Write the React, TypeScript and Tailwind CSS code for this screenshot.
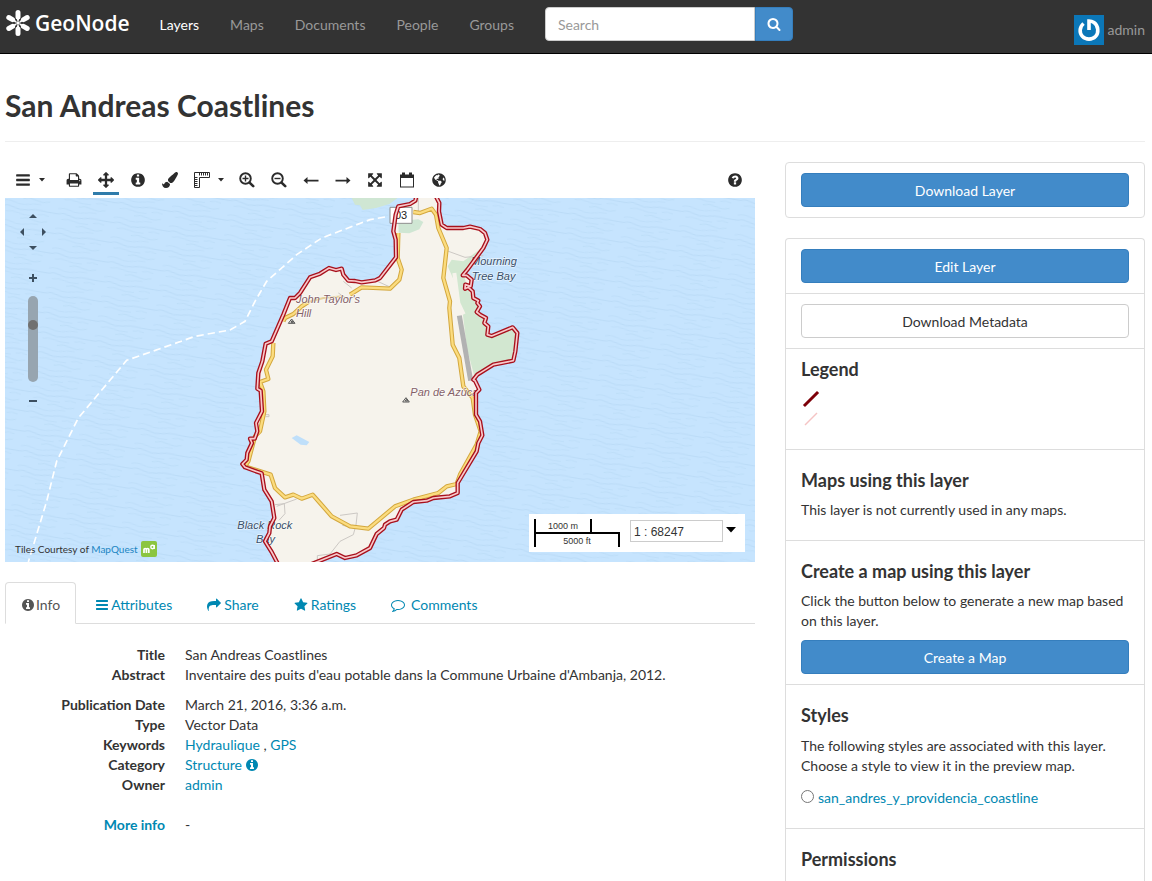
import { useState } from "react";
import type { ReactNode } from "react";
import { FaGlobeAmericas, FaPaintBrush } from "react-icons/fa";

const DISC =
  "M1664 896q0 209-103 385.5t-279.5 279.5-385.5 103-385.5-103-279.5-279.5-103-385.5 103-385.5 279.5-279.5 385.5-103 385.5 103 279.5 279.5 103 385.5z";

const ICONS = {
  bars: "M1664 1344v128q0 26-19 45t-45 19h-1408q-26 0-45-19t-19-45v-128q0-26 19-45t45-19h1408q26 0 45 19t19 45zm0-512v128q0 26-19 45t-45 19h-1408q-26 0-45-19t-19-45v-128q0-26 19-45t45-19h1408q26 0 45 19t19 45zm0-512v128q0 26-19 45t-45 19h-1408q-26 0-45-19t-19-45v-128q0-26 19-45t45-19h1408q26 0 45 19t19 45z",
  info:
    "M1152 1376v-160q0-14-9-23t-23-9h-96v-512q0-14-9-23t-23-9h-320q-14 0-23 9t-9 23v160q0 14 9 23t23 9h96v320h-96q-14 0-23 9t-9 23v160q0 14 9 23t23 9h448q14 0 23-9t9-23zM1024 480v-160q0-14-9-23t-23-9h-192q-14 0-23 9t-9 23v160q0 14 9 23t23 9h192q14 0 23-9t9-23z" + DISC,
  question:
    "M1024 1376v-192q0-14-9-23t-23-9h-192q-14 0-23 9t-9 23v192q0 14 9 23t23 9h192q14 0 23-9t9-23zm256-672q0-88-55.5-163t-138.5-116-170-41q-243 0-371 213-15 24 8 42l132 100q7 6 19 6 16 0 25-12 53-68 86-92 34-24 86-24 48 0 85.5 26t37.5 59q0 38-20 61t-68 45q-63 28-115.5 86.5t-52.5 125.5v36q0 14 9 23t23 9h192q14 0 23-9t9-23q0-19 21.5-49.5t54.5-49.5q32-18 49-28.5t46-35 44.5-48 28-60.5 12.5-81z" + DISC,
  search:
    "M1216 832q0-185-131.5-316.5t-316.5-131.5-316.5 131.5-131.5 316.5 131.5 316.5 316.5 131.5 316.5-131.5 131.5-316.5zm512 832q0 52-38 90t-90 38q-54 0-90-38l-343-342q-179 124-399 124-143 0-273.5-55.5t-225-150-150-225-55.5-273.5 55.5-273.5 150-225 225-150 273.5-55.5 273.5 55.5 225 150 150 225 55.5 273.5q0 220-124 399l343 343q37 37 37 90z",
  print:
    "M448 1536h896v-256h-896v256zm0-640h896v-384h-160q-40 0-68-28t-28-68v-160h-640v640zm1152 64q0-26-19-45t-45-19-45 19-19 45 19 45 45 19 45-19 19-45zm128 0v416q0 13-9.5 22.5t-22.5 9.5h-224v160q0 40-28 68t-68 28h-960q-40 0-68-28t-28-68v-160h-224q-13 0-22.5-9.5t-9.5-22.5v-416q0-79 56.5-135.5t135.5-56.5h64v-544q0-40 28-68t68-28h672q40 0 88 20t76 48l152 152q28 28 48 76t20 88v256h64q79 0 135.5 56.5t56.5 135.5z",
  move: "M1792 896q0 26-19 45l-256 256q-19 19-45 19t-45-19-19-45v-128h-384v384h128q26 0 45 19t19 45-19 45l-256 256q-19 19-45 19t-45-19l-256-256q-19-19-19-45t19-45 45-19h128v-384h-384v128q0 26-19 45t-45 19-45-19l-256-256q-19-19-19-45t19-45l256-256q19-19 45-19t45 19 19 45v128h384v-384h-128q-26 0-45-19t-19-45 19-45l256-256q19-19 45-19t45 19l256 256q19 19 19 45t-19 45-45 19h-128v384h384v-128q0-26 19-45t45-19 45 19l256 256q19 19 19 45z",
  expand:
    "M1411 541l-355 355 355 355 144-144q29-31 70-14 39 17 39 59v448q0 26-19 45t-45 19h-448q-42 0-59-40-17-39 14-69l144-144-355-355-355 355 144 144q31 30 14 69-17 40-59 40h-448q-26 0-45-19t-19-45v-448q0-42 40-59 39-17 69 14l144 144 355-355-355-355-144 144q-19 19-45 19-12 0-24-5-40-17-40-59v-448q0-26 19-45t45-19h448q42 0 59 40 17 39-14 69l-144 144 355 355 355-355-144-144q-31-30-14-69 17-40 59-40h448q26 0 45 19t19 45v448q0 42-39 59-13 5-25 5-26 0-45-19z",
  share:
    "M1792 640q0 26-19 45l-512 512q-19 19-45 19t-45-19-19-45v-256h-224q-98 0-175.5 6t-154 21.5-133 42.5-105.5 69.5-80 101-48.5 138.5-17.5 181q0 55 5 123 0 6 2.5 23.5t2.5 26.5q0 15-8.5 25t-23.5 10q-16 0-28-17-7-9-13-22t-13.5-30-10.5-24q-127-285-127-451 0-199 53-333 162-403 875-403h224v-256q0-26 19-45t45-19 45 19l512 512q19 19 19 45z",
  star: "M1728 647q0 22-26 48l-363 354 86 500q1 7 1 20 0 21-10.5 35.5t-30.5 14.5q-19 0-40-12l-449-236-449 236q-22 12-40 12-21 0-31.5-14.5t-10.5-35.5q0-6 2-20l86-500-364-354q-25-27-25-48 0-37 56-46l502-73 225-455q19-41 49-41t49 41l225 455 502 73q56 9 56 46z",
  comment:
    "M896 384q-204 0-381.5 69.5t-282 187.5-104.5 255q0 112 71.5 213.5t201.5 175.5l87 50-27 96q-24 91-70 172 152-63 275-171l43-38 57 6q69 8 130 8 204 0 381.5-69.5t282-187.5 104.5-255-104.5-255-282-187.5-381.5-69.5zm896 512q0 174-120 321.5t-326 233-450 85.5q-70 0-145-8-198 175-460 242-49 14-114 22h-5q-15 0-27-10.5t-16-27.5v-1q-3-4-.5-12t2-10 4.5-9.5l6-9 7-8.5 8-9q7-8 31-34.5t34.5-38 31-39.5 32.5-51 27-59 26-76q-157-89-247.5-220t-90.5-281q0-174 120-321.5t326-233 450-85.5 450 85.5 326 233 120 321.5z",
};

type IconName = keyof typeof ICONS;

function Icon({ name, className = "size-4" }: { name: IconName; className?: string }) {
  return (
    <svg viewBox="0 0 1792 1792" className={`shrink-0 ${className}`} fill="currentColor" fillRule="evenodd" aria-hidden="true">
      <path d={ICONS[name]} />
    </svg>
  );
}

function Magnifier({ sign }: { sign: string }) {
  return (
    <svg viewBox="0 0 16 16" className="size-4" fill="none" stroke="currentColor" aria-hidden="true">
      <circle cx="6.500" cy="6.500" r="5.300" strokeWidth="1.900" />
      <path d="M10.800 10.800l3.400 3.400" strokeWidth="2.600" strokeLinecap="round" />
      <path d={sign} strokeWidth="1.400" />
    </svg>
  );
}

function LongArrow({ d }: { d: string }) {
  return (
    <svg viewBox="0 0 16 16" className="size-4" fill="currentColor" aria-hidden="true">
      <path d={d} />
    </svg>
  );
}

function Caret() {
  return (
    <svg viewBox="0 0 6 4" className="h-1 w-[6px] shrink-0" fill="currentColor" aria-hidden="true">
      <path d="M0 0h6L3 3.500z" />
    </svg>
  );
}

function Logo() {
  return (
    <svg viewBox="0 0 26 28" className="h-7 w-[26px]" stroke="#fff" strokeLinecap="round" aria-hidden="true">
      <g strokeWidth="5">
        <path d="M13 3.500V8M13 20v4.500M3.800 8.500l3.700 2.100M18.500 17.400l3.700 2.100M22.200 8.500l-3.700 2.100M7.500 17.400l-3.700 2.100" />
      </g>
      <g strokeWidth="2">
        <path d="M13 8v3M13 17v3M8 11l2.500 1.500M15.500 15.500L18 17M18 11l-2.500 1.500M10.500 15.500L8 17" />
      </g>
      <circle cx="13" cy="14" r="1.800" fill="#fff" stroke="none" />
    </svg>
  );
}

const navLinks = ["Layers", "Maps", "Documents", "People", "Groups"];

function Navbar() {
  return (
    <header className="flex h-[54px] items-start border-b border-black bg-[#333] pl-[5px] pr-[7px]">
      <a href="#" className="mt-[9px] flex items-center gap-1 font-['Open_Sans',sans-serif] text-[21px] leading-7 font-semibold text-white">
        <Logo />
        GeoNode
      </a>
      <nav className="ml-[15px] flex gap-px">
        {navLinks.map((link, i) => (
          <a key={link} href="#" className={`px-[15px] py-[15px] leading-5 ${i === 0 ? "text-white" : "text-[#999]"}`}>
            {link}
          </a>
        ))}
      </nav>
      <form className="mt-[7px] ml-4 flex" onSubmit={(e) => e.preventDefault()}>
        <input
          type="text"
          aria-label="Search"
          placeholder="Search"
          className="h-[34px] w-[210px] rounded-l border border-[#ccc] bg-white px-3 placeholder:text-[#999]"
        />
        <button aria-label="Run search" className="flex h-[34px] w-[38px] items-center justify-center rounded-r border border-[#357ebd] bg-[#428bca] text-white">
          <Icon name="search" className="size-[14px]" />
        </button>
      </form>
      <a href="#" className="mt-[15px] ml-auto flex items-center gap-1 text-[#999]">
        <svg viewBox="0 0 30 30" className="size-[30px]" aria-hidden="true">
          <path fill="#0b77b8" d="M0 0h30v30H0z" />
          <path d="M9.500 8.500C5.500 12 5 18 8.500 21.500c3.500 3.500 9.500 3.500 13 0C25 18 24.500 10.500 20 7.500 18 6.200 15.500 6 15 6v9" fill="none" stroke="#fff" strokeWidth="3.600" />
        </svg>
        admin
      </a>
    </header>
  );
}

function ToolButton({ label, wide, active, children }: { label: string; wide?: boolean; active?: boolean; children: ReactNode }) {
  return (
    <button
      aria-label={label}
      className={`flex h-[33px] items-center justify-center gap-2 border-b-[3px] pt-[6px] ${wide ? "w-[39px]" : "w-[26px]"} ${active ? "border-[#2f7cab]" : "border-transparent"}`}
    >
      {children}
    </button>
  );
}

function Toolbar() {
  return (
    <div className="flex h-9 items-start gap-[6px] pl-[5px] text-[#2b2b2b]">
      <span className="mr-[6px]">
        <ToolButton label="Menu" wide>
          <Icon name="bars" />
          <Caret />
        </ToolButton>
      </span>
      <ToolButton label="Print">
        <Icon name="print" />
      </ToolButton>
      <ToolButton label="Pan map" active>
        <Icon name="move" />
      </ToolButton>
      <ToolButton label="Get feature info">
        <Icon name="info" />
      </ToolButton>
      <ToolButton label="Edit styles">
        <FaPaintBrush className="size-4" />
      </ToolButton>
      <ToolButton label="Measure" wide>
        <svg viewBox="0 0 16 16" className="size-4 shrink-0" fill="none" stroke="currentColor" aria-hidden="true">
          <path d="M.500 .500h15v5h-10v10h-5z" />
          <path d="M5.500 1v2.500M7.500 1v2.500M9.500 1v2.500M11.500 1v2.500M13.500 1v2.500M1 5.500h2.500M1 7.500h2.500M1 9.500h2.500M1 11.500h2.500M1 13.500h2.500" />
        </svg>
        <Caret />
      </ToolButton>
      <ToolButton label="Zoom in">
        <Magnifier sign="M3.500 6.500h6M6.500 3.500v6" />
      </ToolButton>
      <ToolButton label="Zoom out">
        <Magnifier sign="M3.500 6.500h6" />
      </ToolButton>
      <ToolButton label="Previous extent">
        <LongArrow d="M.500 8.500l4-3.500v2.700h11v1.700h-11V12z" />
      </ToolButton>
      <ToolButton label="Next extent">
        <LongArrow d="M15.500 8.500l-4-3.500v2.700H.500v1.700h11V12z" />
      </ToolButton>
      <ToolButton label="Zoom to layer extent">
        <Icon name="expand" />
      </ToolButton>
      <ToolButton label="Timeline">
        <svg viewBox="0 0 16 16" className="size-4" fill="currentColor" aria-hidden="true">
          <path fillRule="evenodd" d="M1 2.500h2V.500h3v2h4v-2h3v2h2v13H1zM2 6v8.500h12V6z" />
        </svg>
      </ToolButton>
      <ToolButton label="3D viewer">
        <FaGlobeAmericas className="size-[14px]" />
      </ToolButton>
      <span className="ml-auto pr-[7px]">
        <ToolButton label="Help">
          <Icon name="question" />
        </ToolButton>
      </span>
    </div>
  );
}

const COAST =
  "M560-10L556 8 540 18 505 25 497 50 490 100 497 125 498 178 450 240 436 247 395 253 375 249 355 248 340 230 335 212 318 216 297 210 270 227 240 238 210 285 195 300 180 300 160 350 125 430 107 437 97 490 85 525 82 572 92 578 96 640 78 675 82 700 74 722 60 722 66 735 52 765 50 785 37 798 45 808 95 826 103 875 125 910 133 960 120 985 118 1005 105 1030 125 1062 145 1100";
const COAST_EAST =
  "M240 1100L320 1068 345 1080 380 1072 420 1050 440 1008 462 990 465 980 480 970 500 965 515 935 550 912 590 908 610 900 660 895 683 885 683 855 740 760 745 735 757 712 750 670 738 650 738 585 748 575 735 548 730 545 742 530 790 500 850 488 856 460 862 405 848 388 785 414 772 410 775 385 763 375 768 360 750 350 740 342 750 325 742 315 745 308 730 300 728 280 715 268 705 272 706 260 722 265 725 245 710 232 698 232 712 215 760 150 772 125 765 105 750 93 720 86 700 90 650 90 635 80 627 40 628 15 615-10";
const LAND = COAST + " " + COAST_EAST.replace("M", "L") + "z";

const ROADS = [
  "M550 42L570 45 605 32 618 50 625 90 650 150 640 240 660 310 658 330 668 440 688 480 700 565 728 600 735 650 752 700 740 740 690 830 680 858 650 865 625 885 550 905 495 925 415 992 360 985 305 955 270 915 248 890 215 902 190 890 165 898 135 870 122 830 45 805",
  "M505 105L503 180 515 215 508 245 480 272 395 268 360 290",
  "M235 312L215 325 190 348 165 360 160 370",
  "M130 435L128 475 108 515 115 543 90 552 100 580 103 640 90 700 75 715 55 790 45 805",
];

function Peak({ x, y }: { x: number; y: number }) {
  return (
    <g transform={`translate(${x} ${y})`} fill="none" stroke="#555" strokeWidth="3" strokeLinejoin="round">
      <path d="M-10 14L0 1l10 13z" />
      <path d="M-2 11l3-5 4 5z" />
    </g>
  );
}

function MapCanvas() {
  return (
    <svg viewBox="-675 0 2250 1092" className="block h-auto w-full bg-[#c6e4fe]" aria-label="Map of San Andreas" role="img">
      <defs>
        <pattern id="waves" width="168" height="60" patternUnits="userSpaceOnUse" patternTransform="rotate(9)">
          <g fill="none" stroke="#b5d8f4" strokeWidth="3">
            <path opacity=".7" d="M0 8q18-8 36 0t42 2 40-4 50 2" />
            <path opacity=".5" d="M14 23q20-6 38 0t44 2M110 20q16-6 34 0" />
            <path opacity=".6" d="M60 38q20-8 40 0t42-2" />
            <path opacity=".5" d="M0 52q18-7 36 0t44 1 36-4" />
          </g>
        </pattern>
      </defs>
      <rect x="-675" width="2250" height="1092" fill="url(#waves)" />

      <path d="M365 0l10 20 15 2 8 14 40-6 40-12 25-18z" fill="#cfe6d3" />
      <path d={LAND} fill="#f6f3ec" />
      <path d="M505 70l60-6 15 8-12 22-30 12-32-2z" fill="#cfe6d3" />
      <path d="M755 150l-55 40-35-5-12 20 20 45 12 62 14 40 12 100 22 82 58-32 58-15 10-80-12-17-63 26-14-6 2-25-20-33-15-10 8-20-18-22-15-30-5-18-6-28z" fill="#d2e7d0" />
      <path d="M673 225l12 90 16 34" fill="none" stroke="#f6f3ec" strokeWidth="12" />
      <path d="M185 720l15-8 38 20-8 10-18-2z" fill="#bfdffa" />
      <path d="M688 353l34 195" stroke="#b2b2b2" strokeWidth="15" />

      <g fill="none" stroke="#ccc8c4" strokeWidth="3">
        <path d="M650 158l55 20 55-5M436 247l44 20M140 925l60-22M135 920l28-3 2 30-18 20M330 952l52-7-5 45-40-8M375 992l-5 18-40 20-30 38-38 5v18M565 0v42M105 650h12v6h-10M340 250l25 20M325 285l30 20" />
      </g>

      {ROADS.map((d) => (
        <g key={d} fill="none" strokeLinejoin="round">
          <path d={d} stroke="#d3a73d" strokeWidth="13" />
          <path d={d} stroke="#fbdc7f" strokeWidth="7" />
        </g>
      ))}
      <path d="M235 312l45-12 60-5" fill="none" stroke="#e4cf9a" strokeWidth="6" />

      <path
        d="M465 57L420 65 275 120 200 170 110 250 75 310 45 370 0 396-105 415-210 452-310 487-455 660-520 790-550 910-605 1092"
        fill="none"
        stroke="#fff"
        strokeWidth="5"
        strokeDasharray="22 12"
      />

      <path d="M480 28h66v48h-66z" fill="#fff" stroke="#8f8f8f" strokeWidth="3" />
      <g className="font-['Liberation_Sans',sans-serif]" fontSize="33" fontStyle="italic" stroke="#fff" strokeOpacity=".6" strokeWidth="4" paintOrder="stroke">
        <text x="495" y="63" fontStyle="normal" fill="#222">03</text>
        <g fill="#39506b">
          <text x="723" y="202">Mourning</text>
          <text x="725" y="245">Tree Bay</text>
          <text x="22" y="994">Black Rock</text>
          <text x="78" y="1036">Bay</text>
        </g>
        <g fill="#846067">
          <text x="198" y="316">John Taylor's</text>
          <text x="198" y="358">Hill</text>
          <text x="541" y="594">Pan de Azúcar</text>
        </g>
      </g>
      <path d="M742 552l40 0 0 50-44 0z" fill="#c6e4fe" />
      <Peak x={185} y={362} />
      <Peak x={528} y={598} />

      {[COAST, COAST_EAST].map((d) => (
        <g key={d} fill="none" strokeLinejoin="round">
          <path d={d} stroke="#a8101c" strokeWidth="13" />
          <path d={d} stroke="#f8c9cb" strokeWidth="5" />
        </g>
      ))}
    </svg>
  );
}

function PanButton({ label, d, place }: { label: string; d: string; place: string }) {
  return (
    <button aria-label={label} className={`flex items-center justify-center text-[#3d4f60] ${place}`}>
      <svg viewBox="0 0 8 8" className="size-2" fill="currentColor" aria-hidden="true">
        <path d={d} />
      </svg>
    </button>
  );
}

function MapControls() {
  const [zoom, setZoom] = useState(68);

  return (
    <div className="absolute top-3 left-[10px] flex w-9 flex-col items-center">
      <div className="grid grid-cols-[14px_8px_14px] grid-rows-[12px_20px_12px]">
        <PanButton label="Pan north" d="M0 6h8L4 2z" place="col-start-2" />
        <PanButton label="Pan west" d="M6 0v8L2 4z" place="col-start-1 row-start-2" />
        <PanButton label="Pan east" d="M2 0v8l4-4z" place="col-start-3 row-start-2" />
        <PanButton label="Pan south" d="M0 2h8L4 6z" place="col-start-2 row-start-3" />
      </div>
      <PanButton label="Zoom in" d="M3 0h2v3h3v2H5v3H3V5H0V3h3z" place="mt-[18px] h-3" />
      <input
        type="range"
        aria-label="Zoom level"
        value={zoom}
        onChange={(e) => setZoom(Number(e.target.value))}
        className="mt-3 h-[86px] w-[10px] appearance-none rounded-full bg-[#97a5b0] [direction:rtl] [writing-mode:vertical-lr] [&::-webkit-slider-thumb]:size-[10px] [&::-webkit-slider-thumb]:appearance-none [&::-webkit-slider-thumb]:rounded-full [&::-webkit-slider-thumb]:bg-[#707070]"
      />
      <PanButton label="Zoom out" d="M0 3h8v2H0z" place="mt-[13px] h-3" />
    </div>
  );
}

function ScaleBox() {
  return (
    <div className="absolute right-[10px] bottom-[10px] flex h-[38px] w-[216px] items-start bg-white pt-[5px] pl-[5px] font-['Liberation_Sans',sans-serif]">
      <div className="w-[86px] text-center text-[9px] leading-[14px] text-[#333]">
        <div className="h-[13px] w-[58px] border-x-2 border-black">1000 m</div>
        <div className="h-[15px] border-x-2 border-t-2 border-black">5000 ft</div>
      </div>
      <input
        aria-label="Map scale"
        defaultValue="1 : 68247"
        className="mt-px ml-[10px] h-[22px] w-[93px] border border-[#ccc] px-[3px] pt-px text-[12px] text-[#333]"
      />
      <button aria-label="Choose scale" className="mt-2 ml-[3px] text-black">
        <svg viewBox="0 0 10 6" className="h-[6px] w-[10px]" fill="currentColor" aria-hidden="true">
          <path d="M0 0h10L5 5.500z" />
        </svg>
      </button>
    </div>
  );
}

function MapPreview() {
  return (
    <div className="relative">
      <MapCanvas />
      <MapControls />
      <div className="absolute bottom-[5px] left-[10px] flex items-center gap-[3px] text-[10px] leading-4 text-[#333]">
        <span>
          Tiles Courtesy of <a href="#" className="text-[#1a84c2]">MapQuest</a>
        </span>
        <svg viewBox="0 0 16 16" className="size-4" aria-hidden="true">
          <rect width="16" height="16" rx="2" fill="#8bc53f" />
          <path d="M3 12V8.500q0-1 1.200-1t1.200 1V12m0-3.500q0-1 1.200-1t1.200 1V12" fill="none" stroke="#fff" strokeWidth="1.700" />
          <circle cx="11.500" cy="6" r="1.700" fill="none" stroke="#fff" strokeWidth="1.400" />
          <path d="M13.300 4v4" stroke="#fff" strokeWidth="1.200" />
        </svg>
      </div>
      <ScaleBox />
    </div>
  );
}

const tabs: { label: string; icon: IconName; gap: string }[] = [
  { label: "Info", icon: "info", gap: "gap-px" },
  { label: "Attributes", icon: "bars", gap: "gap-[2px]" },
  { label: "Share", icon: "share", gap: "gap-[3px]" },
  { label: "Ratings", icon: "star", gap: "gap-[3px]" },
  { label: "Comments", icon: "comment", gap: "gap-[6px]" },
];

function Tabs() {
  const [selected, setSelected] = useState("Info");

  return (
    <div role="tablist" className="mt-5 flex gap-[3px] border-b border-[#ddd]">
      {tabs.map((tab) => (
        <button
          key={tab.label}
          role="tab"
          aria-selected={selected === tab.label}
          onClick={() => setSelected(tab.label)}
          className={`-mb-px flex h-[42px] items-center rounded-t border px-[15px] pt-[3px] ${tab.gap} ${
            selected === tab.label ? "border-[#ddd] border-b-white bg-white text-[#555]" : "border-transparent text-[#0088b2]"
          }`}
        >
          <Icon name={tab.icon} className="size-[14px]" />
          {tab.label}
        </button>
      ))}
    </div>
  );
}

function Row({ term, children }: { term: ReactNode; children: ReactNode }) {
  return (
    <div className="flex gap-5">
      <dt className="w-40 shrink-0 text-right font-bold">{term}</dt>
      <dd>{children}</dd>
    </div>
  );
}

const link = "text-[#0088b2]";

function LayerInfo() {
  return (
    <dl className="mt-[21px]">
      <Row term="Title">San Andreas Coastlines</Row>
      <Row term="Abstract">Inventaire des puits d'eau potable dans la Commune Urbaine d'Ambanja, 2012.</Row>
      <div className="mt-[10px]">
        <Row term="Publication Date">March 21, 2016, 3:36 a.m.</Row>
        <Row term="Type">Vector Data</Row>
        <Row term="Keywords">
          <a href="#" className={link}>Hydraulique</a> , <a href="#" className={link}>GPS</a>
        </Row>
        <Row term="Category">
          <a href="#" className={`flex items-center gap-[3px] ${link}`}>
            Structure <Icon name="info" className="size-[14px]" />
          </a>
        </Row>
        <Row term="Owner">
          <a href="#" className={link}>admin</a>
        </Row>
      </div>
      <div className="mt-5">
        <Row term={<a href="#" className={link}>More info</a>}>-</Row>
      </div>
    </dl>
  );
}

function PrimaryButton({ children }: { children: ReactNode }) {
  return <button className="block h-[34px] w-full rounded border border-[#357ebd] bg-[#428bca] pt-[2px] text-white">{children}</button>;
}

function Heading({ children }: { children: ReactNode }) {
  return <h4 className="mb-[10px] text-[18px] leading-5 font-bold">{children}</h4>;
}

function Sidebar() {
  return (
    <aside className="flex flex-col">
      <div className="rounded border border-[#ddd] px-[15px] py-[10px]">
        <PrimaryButton>Download Layer</PrimaryButton>
      </div>
      <div className="mt-5 grow divide-y divide-[#ddd] rounded-t border border-b-0 border-[#ddd]">
        <section className="px-[15px] py-[10px]">
          <PrimaryButton>Edit Layer</PrimaryButton>
        </section>
        <section className="px-[15px] py-[10px]">
          <button className="block h-[34px] w-full rounded border border-[#ccc] bg-white pt-[2px]">Download Metadata</button>
        </section>
        <section className="px-[15px] pt-[10px] pb-5">
          <Heading>Legend</Heading>
          <svg viewBox="0 0 20 40" className="h-10 w-5" aria-label="Coastline symbols" role="img">
            <path d="M4 16L16 4" stroke="#7d0008" strokeWidth="3" strokeLinecap="square" />
            <path d="M4 36L16 24" stroke="#f5c4c4" strokeWidth="1.500" />
          </svg>
        </section>
        <section className="px-[15px] py-5">
          <Heading>Maps using this layer</Heading>
          <p>This layer is not currently used in any maps.</p>
        </section>
        <section className="px-[15px] pt-5 pb-[10px]">
          <Heading>Create a map using this layer</Heading>
          <p className="mb-[9px]">Click the button below to generate a new map based on this layer.</p>
          <PrimaryButton>Create a Map</PrimaryButton>
        </section>
        <section className="px-[15px] py-5">
          <Heading>Styles</Heading>
          <p className="mt-[11px]">The following styles are associated with this layer. Choose a style to view it in the preview map.</p>
          <label className="mt-3 flex items-start gap-1">
            <input type="radio" name="style" className="mt-[2px] size-[13px]" />
            <a href="#" className={link}>san_andres_y_providencia_coastline</a>
          </label>
        </section>
        <section className="px-[15px] pt-5">
          <Heading>Permissions</Heading>
        </section>
      </div>
    </aside>
  );
}

export default function App() {
  return (
    <div className="flex min-h-screen flex-col bg-white font-['Lato',sans-serif] text-[14px] leading-5 text-[#333]">
      <Navbar />
      <main className="flex grow flex-col pl-[5px] pr-[7px]">
        <h2 className="border-b border-[#eee] pt-[35px] pb-5 text-[30px] leading-8 font-bold">San Andreas Coastlines</h2>
        <div className="mt-5 grid grow grid-cols-[750fr_360fr] gap-[30px]">
          <div>
            <Toolbar />
            <MapPreview />
            <Tabs />
            <LayerInfo />
          </div>
          <Sidebar />
        </div>
      </main>
    </div>
  );
}
